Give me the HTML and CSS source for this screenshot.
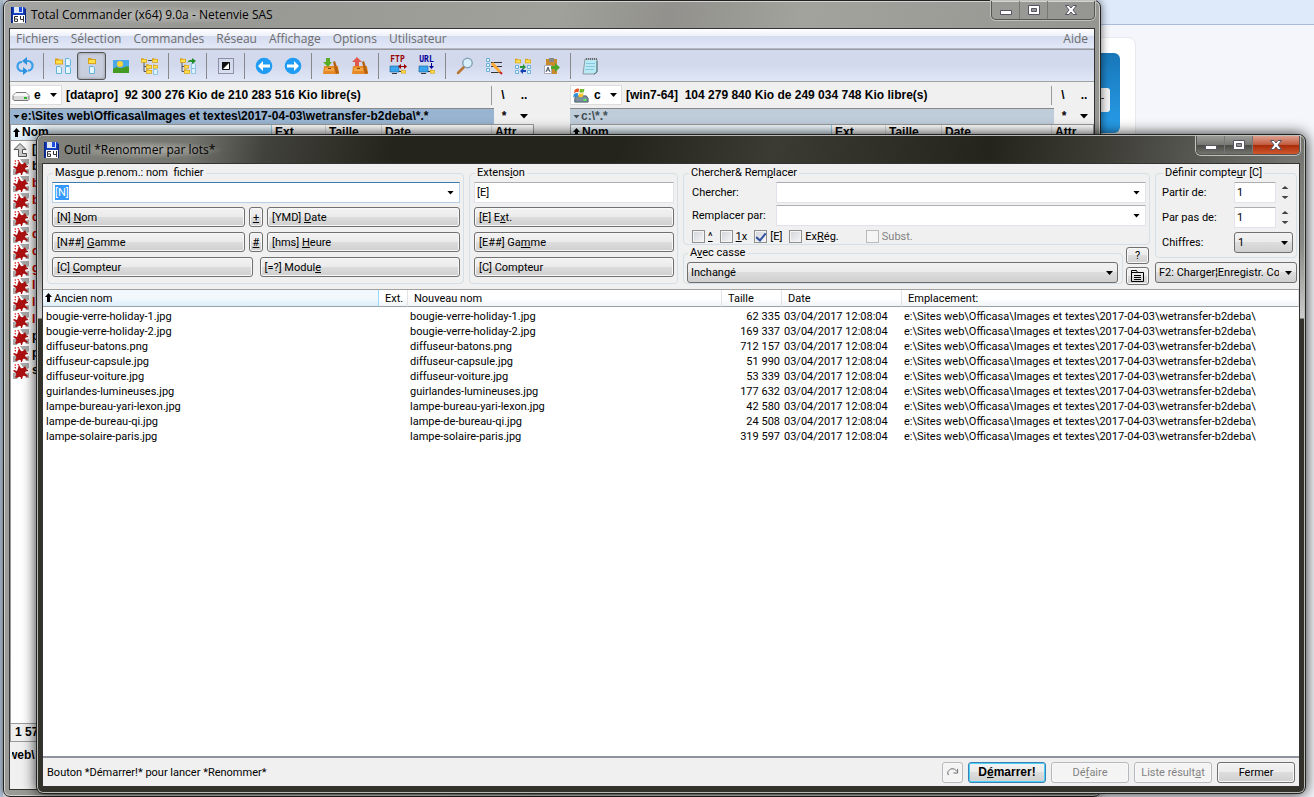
FILE: index.html
```html
<!DOCTYPE html>
<html lang="fr">
<head>
<meta charset="utf-8">
<title>Total Commander (x64) 9.0a - Netenvie SAS</title>
<link rel="stylesheet" href="styles.css">
</head>
<body>
<svg class="defs" aria-hidden="true">
  <symbol id="disk" viewBox="0 0 16 16"><path d="M1 0h13l2 2v14H1z" fill="#123fc4"/><path d="M1 0h1.500v16H1zM14.500 2H16v14h-1.500z" fill="#0a2680"/><path d="M4 0h9v6H4z" fill="#dfe7f5"/><path d="M9 0h3v5H9z" fill="#1d4fdc"/><path d="M3 8h12v8H3z" fill="#fff"/><path d="M8 9.500H4.500v5h3v-2.500h-3M10.500 9v3.500H14M13.500 9v6" stroke="#333" fill="none"/></symbol>
  <symbol id="folder" viewBox="0 0 8 6"><path d="M0 0h3l1 1h4v5H0z" fill="#d9a31a"/><path d="M1 2h6v3H1z" fill="#ffe04d"/></symbol>
  <symbol id="page" viewBox="0 0 6 8"><path d="M.5.5h3.500l1.500 1.500v5.500h-5z" fill="#e4f5fd" stroke="#65b4dc"/></symbol>
  <symbol id="refresh" viewBox="0 0 18 18"><path d="M8 14H6a4.500 4.500 0 0 1-4.500-5A4.500 4.500 0 0 1 6 5M10 4h2a4.500 4.500 0 0 1 4.500 5 4.500 4.500 0 0 1-4.500 4.500" fill="none" stroke="#3a9ee8" stroke-width="2.200"/><path d="M7 10v8l5-4zM11 0v8L6 4z" fill="#2c91df"/></symbol>
  <symbol id="left" viewBox="0 0 18 18"><circle cx="9" cy="9" r="8.300" fill="#209cf4"/><path d="M3 9l5-5v3.500h7v3H8V14z" fill="#fff"/></symbol>
  <symbol id="right" viewBox="0 0 18 18"><circle cx="9" cy="9" r="8.300" fill="#209cf4"/><path d="M15 9l-5-5v3.500H3v3h7V14z" fill="#fff"/></symbol>
  <symbol id="brief" viewBox="0 0 18 18"><use href="#folder" x="1" y="1" width="8" height="7"/><use href="#page" x="11" y="1" width="6" height="8"/><use href="#page" x="2" y="9" width="6" height="8"/><use href="#page" x="11" y="9" width="6" height="8"/></symbol>
  <symbol id="full" viewBox="0 0 18 18"><use href="#folder" x="5" y="1" width="8" height="6"/><use href="#page" x="6" y="9" width="6" height="8"/></symbol>
  <symbol id="thumbs" viewBox="0 0 18 18"><path d="M1 3h16v13H1z" fill="#49a8e8"/><circle cx="8" cy="7" r="3" fill="#ffd13a"/><path d="M1 12c4-4 6 0 9-1s5-2 7-1v6H1z" fill="#459b21"/></symbol>
  <symbol id="tree" viewBox="0 0 18 18"><path d="M3 5v9.500h8M3 9.500h7M7 3.500h4" stroke="#555" fill="none"/><use href="#folder" x="0" y="1" width="6" height="5"/><use href="#folder" x="11" y="1" width="6" height="5"/><use href="#folder" x="5" y="7" width="6" height="5"/><use href="#folder" x="12" y="7" width="5" height="5"/><use href="#folder" x="5" y="12" width="6" height="5"/><use href="#page" x="12" y="12" width="5" height="6"/></symbol>
  <symbol id="branch" viewBox="0 0 18 18"><path d="M3 5v9.500h8M3 9.500h7" stroke="#555" fill="none"/><use href="#folder" x="1" y="1" width="6" height="5"/><use href="#folder" x="5" y="7" width="5" height="5"/><use href="#folder" x="5" y="12" width="6" height="5"/><use href="#page" x="12" y="6" width="5" height="6"/><use href="#page" x="12" y="11" width="5" height="6"/><path d="M8 6q2-4 5-3V1l4 3-4 3V5q-3-1-5 1" fill="#218c27"/></symbol>
  <symbol id="invert" viewBox="0 0 18 18"><path d="M1.500 1.500h15v15h-15z" fill="none" stroke="#445" stroke-dasharray="1 1"/><path d="M5.500 5.500h7v7h-7z" fill="#fff" stroke="#111"/><path d="M5 5h8l-8 8z" fill="#111"/></symbol>
  <symbol id="pack" viewBox="0 0 18 18"><path d="M2 9h14l1 8H1z" fill="#e58a24"/><path d="M11 5l2-1 4 12-3 1z" fill="#b36112"/><path d="M3 11h9v3H3z" fill="#f4a64a"/><path d="M6 11h3v1H6z" fill="#7b420a"/><path d="M4 1h4v4h2L6 10 1 5h3z" fill="#58ad22"/></symbol>
  <symbol id="unpack" viewBox="0 0 18 18"><path d="M2 9h14l1 8H1z" fill="#e58a24"/><path d="M11 5l2-1 4 12-3 1z" fill="#b36112"/><path d="M3 11h9v3H3z" fill="#f4a64a"/><path d="M6 11h3v1H6z" fill="#7b420a"/><path d="M6 0l5 5H8v4H4V5H1z" fill="#e25a4d"/></symbol>
  <symbol id="net" viewBox="0 0 18 18"><path d="M1 9h9v6H1z" fill="#38a6ee" stroke="#145b94" stroke-width=".6"/><path d="M3 16.500h5M10 14.500h3" stroke="#333"/><use href="#folder" x="12" y="12" width="5" height="5"/></symbol>
  <symbol id="ftparrow" viewBox="0 0 18 18"><path d="M9 9.500l3-2.500v2h3V7l3 2.500-3 2.500v-2h-3v2z" fill="#900"/></symbol>
  <symbol id="urlarrow" viewBox="0 0 18 18"><path d="M13 6h1v3h2l-2.500 3L11 9h2z" fill="#009"/></symbol>
  <symbol id="search" viewBox="0 0 18 18"><path d="M2 16l6-6" stroke="#b87433" stroke-width="2.500" stroke-linecap="round"/><circle cx="11.500" cy="6" r="4.700" fill="#d7f0fc" stroke="#88a2b8" stroke-width="1.500"/></symbol>
  <symbol id="rename" viewBox="0 0 18 18"><path d="M1.500 1.500h3v3h-3zM1.500 6.500h3v3h-3zM1.500 11.500h3v3h-3z" fill="#e4f5fd" stroke="#69b1d8"/><path d="M6 5.500h11M6 9.500h11M6 15.500h9" stroke="#333"/><path d="M7 6l8 9" stroke="#fa3" stroke-width="3"/><path d="M15 15l2 2" stroke="#c22" stroke-width="2"/></symbol>
  <symbol id="sync" viewBox="0 0 18 18"><use href="#folder" x="1" y="1" width="6" height="6"/><use href="#folder" x="11" y="1" width="6" height="6"/><path d="M1.500 8.500h3v3h-3zM1.500 13.500h3v3h-3zM13.500 8.500h3v3h-3zM13.500 13.500h3v3h-3z" fill="#e4f5fd" stroke="#69b1d8"/><path d="M6 9h3V7l3 3-3 3v-2H6z" fill="#299636"/><path d="M12 13H9v-2l-3 3 3 3v-2h3z" fill="#153eb2"/></symbol>
  <symbol id="clip" viewBox="0 0 18 18"><path d="M3 2h11v15H3z" fill="#c78b2b"/><path d="M6 1h5v4H6z" fill="#888"/><path d="M1.500 8.500h7v8h-7z" fill="#fff" stroke="#aab"/><path d="M3 15l2-5 2 5M4 13h2" stroke="#456" fill="none"/><path d="M8 9h4V6l5 4.500-5 4.500v-3H8z" fill="#4da82a"/></symbol>
  <symbol id="note" viewBox="0 0 18 18"><path d="M4 2h12v13l-2 2H2z" fill="#b9e9f4" stroke="#8a9aa0"/><path d="M5 2h11" stroke="#6b6b6b" stroke-width="2" stroke-dasharray="1 1"/><path d="M5 6.500h9M5 9.500h9M4 12.500h9" stroke="#84c9db"/><path d="M16 4v11l-3 2" stroke="#57767d" fill="none"/></symbol>
  <symbol id="splat" viewBox="0 0 16 16"><path d="M7 0h9v5l-4 2zM0 10l5-1 2 3-3 4H0zM11 11l5-1v5h-3z" fill="#aaa"/><path d="M5 5l1-3 2 3q2 1 4-2l1 2q0 2 2 2v1q-3 0-3 2l3 3-1 1q-3-2-4-1l-1 3H8q0-3-2-2l-3 1-1-1q2-2 1-4L0 8l1-1 3 1z" fill="#ad1010"/><path d="M1 2l2-1v2zM4 1h2v2zM1 4h2v2z" fill="#d33"/></symbol>
  <symbol id="up" viewBox="0 0 16 16"><path d="M7 1.500l6 6H9.500v4h4v3h-8v-7H1z" fill="#ccc" stroke="#555"/></symbol>
  <symbol id="drive" viewBox="0 0 18 16"><path d="M4 5.500h10l3 3v4l-1 1H2l-1-1v-4z" fill="#d9d9d9" stroke="#777"/><path d="M4 6h10l3 3H1z" fill="#f7f7f7"/><path d="M12 11h3" stroke="#28b828" stroke-width="2"/></symbol>
  <symbol id="windrive" viewBox="0 0 18 18"><path d="M3 10h12l2 3v4H2v-4z" fill="#7b929e" stroke="#456"/><path d="M12 14.500h3" stroke="#5f4" stroke-width="2"/><path d="M2 3q3-2 5-1L6 6Q4 5 1 7z" fill="#e65322"/><path d="M8 2q3 1 5 0l-1 4q-2 1-5 0z" fill="#71b929"/><path d="M1 8q3-2 5-1l-1 4q-3-1-5 1z" fill="#2b91dd"/><path d="M7 7q3 1 5 0l-1 4q-3 1-5 0z" fill="#ffc629"/></symbol>
  <symbol id="min" viewBox="0 0 14 12"><path d="M1.500 6.500h11v4h-11z" fill="#fff" stroke="#556"/></symbol>
  <symbol id="max" viewBox="0 0 14 12"><path d="M1.500 1.500h11v9h-11z" fill="#fff" stroke="#556"/><path d="M4.500 4.500h5v3h-5z" fill="#999" stroke="#556"/></symbol>
  <symbol id="close" viewBox="0 0 14 12"><path d="M1.500 1.500h3.500L7 4l2-2.500h3.500L9 6l3.500 4.500H9L7 8l-2 2.500H1.500L5 6z" fill="#fff" stroke="#556"/></symbol>
</svg>

<div class="desktop">
  <div class="ribbon"></div>
  <div class="card"><div class="tile"><span class="tab">-</span></div></div>
</div>

<section class="window main-window">
  <header class="titlebar">
    <svg class="app-icon"><use href="#disk"/></svg>
    <h1 class="title">Total Commander (x64) 9.0a - Netenvie SAS</h1>
    <div class="controls">
      <button class="ctl" aria-label="Réduire"><svg><use href="#min"/></svg></button>
      <button class="ctl" aria-label="Agrandir"><svg><use href="#max"/></svg></button>
      <button class="ctl ctl-close" aria-label="Fermer"><svg><use href="#close"/></svg></button>
    </div>
  </header>
  <div class="client">
    <nav class="menu">
      <a href="#">Fichiers</a><a href="#">Sélection</a><a href="#">Commandes</a><a href="#">Réseau</a><a href="#">Affichage</a><a href="#">Options</a><a href="#">Utilisateur</a><a href="#" class="help">Aide</a>
    </nav>
    <div class="toolbar">
      <button aria-label="Actualiser"><svg><use href="#refresh"/></svg></button><i class="sep"></i>
      <button aria-label="Abrégé"><svg><use href="#brief"/></svg></button>
      <button aria-label="Détaillé" class="pressed"><svg><use href="#full"/></svg></button>
      <button aria-label="Miniatures"><svg><use href="#thumbs"/></svg></button>
      <button aria-label="Arborescence"><svg><use href="#tree"/></svg></button><i class="sep"></i>
      <button aria-label="Branche"><svg><use href="#branch"/></svg></button><i class="sep"></i>
      <button aria-label="Inverser"><svg><use href="#invert"/></svg></button><i class="sep"></i>
      <button aria-label="Précédent"><svg><use href="#left"/></svg></button>
      <button aria-label="Suivant"><svg><use href="#right"/></svg></button><i class="sep"></i>
      <button aria-label="Compresser"><svg><use href="#pack"/></svg></button>
      <button aria-label="Décompresser"><svg><use href="#unpack"/></svg></button><i class="sep"></i>
      <button class="net-button ftp"><span>FTP</span><svg><use href="#net"/><use href="#ftparrow"/></svg></button>
      <button class="net-button url"><span>URL</span><svg><use href="#net"/><use href="#urlarrow"/></svg></button><i class="sep"></i>
      <button aria-label="Rechercher"><svg><use href="#search"/></svg></button>
      <button aria-label="Renommer"><svg><use href="#rename"/></svg></button>
      <button aria-label="Synchroniser"><svg><use href="#sync"/></svg></button>
      <button aria-label="Copier les noms"><svg><use href="#clip"/></svg></button><i class="sep"></i>
      <button aria-label="Bloc-notes"><svg><use href="#note"/></svg></button>
    </div>
    <div class="panels">
      <div class="panel">
        <div class="drive-row">
          <button class="drive"><svg><use href="#drive"/></svg>e<i class="arrow"></i></button>
          <span class="space">[datapro]&nbsp; 92 300 276 Kio de 210 283 516 Kio libre(s)</span>
          <button class="flat ruled">\</button><button class="flat">..</button>
        </div>
        <div class="path-row">
          <div class="path"><i class="arrow"></i>e:\Sites web\Officasa\Images et textes\2017-04-03\wetransfer-b2deba\*.*</div>
          <button class="flat">*</button><button class="flat" aria-label="Historique"><i class="arrow wide"></i></button>
        </div>
        <div class="columns"><span class="c-name"><svg class="sort" viewBox="0 0 7 9"><path d="M3.500 0L7 4H5v5H2V4H0z"/></svg>Nom</span><span class="c-ext">Ext</span><span class="c-size">Taille</span><span class="c-date">Date</span><span class="c-attr">Attr</span></div>
        <ul class="files">
          <li><svg><use href="#up"/></svg>[..]</li>
          <li><svg><use href="#splat"/></svg>b</li>
          <li class="sel"><svg><use href="#splat"/></svg>b</li>
          <li class="sel"><svg><use href="#splat"/></svg>b</li>
          <li class="sel"><svg><use href="#splat"/></svg>d</li>
          <li class="sel"><svg><use href="#splat"/></svg>d</li>
          <li class="sel"><svg><use href="#splat"/></svg>d</li>
          <li class="sel"><svg><use href="#splat"/></svg>g</li>
          <li class="sel"><svg><use href="#splat"/></svg>l</li>
          <li class="sel"><svg><use href="#splat"/></svg>l</li>
          <li class="sel"><svg><use href="#splat"/></svg>l</li>
          <li><svg><use href="#splat"/></svg>p</li>
          <li><svg><use href="#splat"/></svg>p</li>
          <li><svg><use href="#splat"/></svg>s</li>
        </ul>
        <div class="totals">1 57</div>
      </div>
      <div class="panel right-panel">
        <div class="drive-row">
          <button class="drive"><svg><use href="#windrive"/></svg>c<i class="arrow"></i></button>
          <span class="space">[win7-64]&nbsp; 104 279 840 Kio de 249 034 748 Kio libre(s)</span>
          <button class="flat ruled">\</button><button class="flat">..</button>
        </div>
        <div class="path-row">
          <div class="path idle"><i class="arrow"></i>c:\*.*</div>
          <button class="flat">*</button><button class="flat" aria-label="Historique"><i class="arrow wide"></i></button>
        </div>
        <div class="columns"><span class="c-name"><svg class="sort" viewBox="0 0 7 9"><path d="M3.500 0L7 4H5v5H2V4H0z"/></svg>Nom</span><span class="c-ext">Ext</span><span class="c-size">Taille</span><span class="c-date">Date</span><span class="c-attr">Attr</span></div>
        <ul class="files"></ul>
      </div>
    </div>
    <div class="command"><span>web\</span></div>
  </div>
</section>

<section class="window dialog">
  <header class="titlebar">
    <svg class="app-icon"><use href="#disk"/></svg>
    <h2 class="title">Outil *Renommer par lots*</h2>
    <div class="controls">
      <button class="ctl" aria-label="Réduire"><svg><use href="#min"/></svg></button>
      <button class="ctl" aria-label="Agrandir"><svg><use href="#max"/></svg></button>
      <button class="ctl ctl-close" aria-label="Fermer"><svg><use href="#close"/></svg></button>
    </div>
  </header>
  <div class="client">
    <div class="options">
      <fieldset class="mask">
        <legend><label for="mask">Mas<u>q</u>ue p.renom.: nom&nbsp; fichier</label></legend>
        <div class="combo focus"><input id="mask" type="text" value="[N]"><button aria-label="Ouvrir"><i class="arrow"></i></button></div>
        <div class="buttons"><button class="btn">[N]&nbsp;<u>N</u>om</button><button class="btn tiny"><u>+</u></button><button class="btn">[YMD]&nbsp;<u>D</u>ate</button></div>
        <div class="buttons"><button class="btn">[N##]&nbsp;<u>G</u>amme</button><button class="btn tiny"><u>#</u></button><button class="btn">[hms]&nbsp;<u>H</u>eure</button></div>
        <div class="buttons pair"><button class="btn">[C]&nbsp;<u>C</u>ompteur</button><button class="btn">[=?]&nbsp;Modul<u>e</u></button></div>
      </fieldset>
      <fieldset class="ext">
        <legend><label for="ext">Extens<u>i</u>on</label></legend>
        <div class="combo"><input id="ext" type="text" value="[E]"></div>
        <div class="buttons"><button class="btn">[E]&nbsp;E<u>x</u>t.</button></div>
        <div class="buttons"><button class="btn">[E##]&nbsp;Ga<u>m</u>me</button></div>
        <div class="buttons"><button class="btn">[C] Compteur</button></div>
      </fieldset>
      <div class="replace">
        <fieldset class="find">
          <legend>Chercher&amp; Rem<u>p</u>lacer</legend>
          <div class="field"><label for="find">Chercher:</label><div class="combo"><input id="find" type="text"><button aria-label="Ouvrir"><i class="arrow"></i></button></div></div>
          <div class="field"><label for="repl">Remplacer par:</label><div class="combo"><input id="repl" type="text"><button aria-label="Ouvrir"><i class="arrow"></i></button></div></div>
          <div class="checks">
            <label><input type="checkbox"><u>^</u></label>
            <label><input type="checkbox"><span><u>1</u>x</span></label>
            <label><input type="checkbox" checked>[E]</label>
            <label><input type="checkbox"><span>Ex<u>R</u>ég.</span></label>
            <label class="off"><input type="checkbox" disabled>Subst.</label>
          </div>
        </fieldset>
        <div class="case-row">
          <fieldset class="case">
            <legend><label for="case">A<u>v</u>ec casse</label></legend>
            <div class="select"><select id="case"><option>Inchangé</option></select><i class="arrow"></i></div>
          </fieldset>
          <div class="side">
            <button class="btn">?</button>
            <button class="btn" aria-label="Modifier les noms"><svg viewBox="0 0 14 14"><path d="M.5 12.500V1.500h5l1 2h6v9zM.5 3.500h6M3 6.500h7M3 8.500h7M3 10.500h7" fill="none" stroke="#000"/></svg></button>
          </div>
        </div>
      </div>
      <div class="counter-col">
        <fieldset class="counter">
          <legend>Définir compte<u>u</u>r [C]</legend>
          <div class="field"><label for="start">Partir de:</label><div class="combo"><input id="start" type="text" value="1"></div><div class="spin"><button aria-label="Plus"><i class="arrow up"></i></button><button aria-label="Moins"><i class="arrow"></i></button></div></div>
          <div class="field"><label for="step">Par pas de:</label><div class="combo"><input id="step" type="text" value="1"></div><div class="spin"><button aria-label="Plus"><i class="arrow up"></i></button><button aria-label="Moins"><i class="arrow"></i></button></div></div>
          <div class="field"><label for="digits">Chiffres:</label><div class="select"><select id="digits"><option>1</option></select><i class="arrow"></i></div></div>
        </fieldset>
        <div class="select preset"><select aria-label="Configuration"><option>F2: Charger¦Enregistr. Configuration</option></select><i class="arrow"></i></div>
      </div>
    </div>
    <div class="list">
      <table>
        <colgroup><col class="w-old"><col class="w-ext"><col class="w-new"><col class="w-size"><col class="w-date"><col></colgroup>
        <thead><tr><th class="sorted"><svg class="sort" viewBox="0 0 7 9"><path d="M3.500 0L7 4H5v5H2V4H0z"/></svg>Ancien nom</th><th>Ext.</th><th>Nouveau nom</th><th>Taille</th><th>Date</th><th>Emplacement:</th></tr></thead>
        <tbody>
          <tr><td>bougie-verre-holiday-1.jpg</td><td></td><td>bougie-verre-holiday-1.jpg</td><td class="num">62 335</td><td>03/04/2017 12:08:04</td><td>e:\Sites web\Officasa\Images et textes\2017-04-03\wetransfer-b2deba\</td></tr>
          <tr><td>bougie-verre-holiday-2.jpg</td><td></td><td>bougie-verre-holiday-2.jpg</td><td class="num">169 337</td><td>03/04/2017 12:08:04</td><td>e:\Sites web\Officasa\Images et textes\2017-04-03\wetransfer-b2deba\</td></tr>
          <tr><td>diffuseur-batons.png</td><td></td><td>diffuseur-batons.png</td><td class="num">712 157</td><td>03/04/2017 12:08:04</td><td>e:\Sites web\Officasa\Images et textes\2017-04-03\wetransfer-b2deba\</td></tr>
          <tr><td>diffuseur-capsule.jpg</td><td></td><td>diffuseur-capsule.jpg</td><td class="num">51 990</td><td>03/04/2017 12:08:04</td><td>e:\Sites web\Officasa\Images et textes\2017-04-03\wetransfer-b2deba\</td></tr>
          <tr><td>diffuseur-voiture.jpg</td><td></td><td>diffuseur-voiture.jpg</td><td class="num">53 339</td><td>03/04/2017 12:08:04</td><td>e:\Sites web\Officasa\Images et textes\2017-04-03\wetransfer-b2deba\</td></tr>
          <tr><td>guirlandes-lumineuses.jpg</td><td></td><td>guirlandes-lumineuses.jpg</td><td class="num">177 632</td><td>03/04/2017 12:08:04</td><td>e:\Sites web\Officasa\Images et textes\2017-04-03\wetransfer-b2deba\</td></tr>
          <tr><td>lampe-bureau-yari-lexon.jpg</td><td></td><td>lampe-bureau-yari-lexon.jpg</td><td class="num">42 580</td><td>03/04/2017 12:08:04</td><td>e:\Sites web\Officasa\Images et textes\2017-04-03\wetransfer-b2deba\</td></tr>
          <tr><td>lampe-de-bureau-qi.jpg</td><td></td><td>lampe-de-bureau-qi.jpg</td><td class="num">24 508</td><td>03/04/2017 12:08:04</td><td>e:\Sites web\Officasa\Images et textes\2017-04-03\wetransfer-b2deba\</td></tr>
          <tr><td>lampe-solaire-paris.jpg</td><td></td><td>lampe-solaire-paris.jpg</td><td class="num">319 597</td><td>03/04/2017 12:08:04</td><td>e:\Sites web\Officasa\Images et textes\2017-04-03\wetransfer-b2deba\</td></tr>
        </tbody>
      </table>
    </div>
    <footer class="footer">
      <span class="hint">Bouton *Démarrer!* pour lancer *Renommer*</span>
      <button class="btn redo" aria-label="Rétablir" disabled><svg viewBox="0 0 14 10"><path d="M3 8H2V5l3-3h4l3 3M12.500 2v4.500H8" fill="none" stroke="#666"/></svg></button>
      <button class="btn default">D<u>é</u>marrer!</button>
      <button class="btn" disabled>Dé<u>f</u>aire</button>
      <button class="btn" disabled>Liste résult<u>a</u>t</button>
      <button class="btn">Fermer</button>
    </footer>
  </div>
</section>
<script src="script.js"></script>
</body>
</html>
```

FILE: styles.css
```css
* { box-sizing: border-box; }
html, body { height: 100%; }
body { margin: 0; overflow: hidden; position: relative; background: #f5f6fb; color: #000; font: 11px/15px Roboto, "Liberation Sans", sans-serif; }
button, input, select { font: inherit; color: inherit; margin: 0; padding: 0; border: 0; border-radius: 0; background: none; outline: 0; }
svg { display: block; flex: none; }
.defs { position: absolute; width: 0; height: 0; }

.arrow { width: 7px; height: 4px; background: #000; clip-path: polygon(0 0, 100% 0, 50% 100%); flex: none; }
.arrow.wide { width: 9px; height: 5px; }
.arrow.up { clip-path: polygon(50% 0, 100% 100%, 0 100%); }
.sort { width: 7px; height: 9px; }

.desktop { height: 100%; border-left: 3px solid #b7c8dc; }
.ribbon { height: 25px; background: #deeafa; border-bottom: 1px solid #a9bddb; }
.card { width: 1133px; height: 150px; margin-top: 12px; padding: 15px; background: #fff; border: 1px solid #e8e9ee; border-radius: 8px; }
.tile { height: 80px; padding: 35px 10px 0 0; border-radius: 6px; background: linear-gradient(#1877b8, #289fec); text-align: right; }
.tab { display: inline-block; width: 20px; height: 24px; line-height: 22px; padding-right: 6px; background: #f3f3f3; border-radius: 3px; }

.window { position: absolute; display: flex; flex-direction: column; border: 1px solid #222; border-radius: 7px; padding: 0 5px 6px; }
.main-window { inset: 0 213px 0 3px; background: linear-gradient(100deg, #a5a5a3 0, #979793 15%, #a0a19b 45%, #92918d 54%, #a2a39d 65%, #8f908c 100%); box-shadow: 0 0 8px rgba(0,0,0,.6), inset 0 0 0 1px #d3d3d0; }
.dialog { inset: 134px 8px 3px 36px; background: linear-gradient(#73736e 0, #8a8a86 110px, #ccc 183px, #32322b 184px, #32322b 100%); box-shadow: 0 0 14px rgba(0,0,0,.85), inset 0 0 0 1px #babab6; }
.titlebar { flex: none; display: flex; align-items: center; height: 27px; margin: 0 -4px; padding-left: 5px; border-radius: 6px 6px 0 0; }
.dialog .titlebar { margin-top: 1px; background: linear-gradient(100deg, #83837e 0, #75756f 12%, #42423c 18%, #24241c 28%, #24241c 46%, #3b3b34 58%, #24241c 75%, #3d3d36 84%, #777873 100%); }
.app-icon { width: 16px; height: 16px; }
.title { margin: 0 0 0 5px; padding: 0 10px 0 0; font: 12px/18px "Open Sans", "Noto Sans", sans-serif; background: radial-gradient(closest-side, rgba(190,190,186,.8), rgba(180,180,176,0)); }
.controls { display: flex; align-self: flex-start; margin: 0 4px 0 auto; height: 19px; border: 1px solid #555; border-top: 0; border-radius: 0 0 5px 5px; overflow: hidden; box-shadow: 0 0 0 1px #c0c0bd; }
.ctl { width: 28px; display: flex; align-items: center; justify-content: center; border-right: 1px solid #777; }
.ctl-close { width: 46px; border-right: 0; }
.ctl svg { width: 14px; height: 12px; }
.dialog .ctl { background: linear-gradient(#9b9b98, #777773 49%, #4a4a44 50%, #757570); }
.dialog .ctl-close { background: linear-gradient(#dda090, #c15a3e 49%, #a82a08 50%, #d0582d); }
.client { flex: 1; min-height: 0; display: flex; flex-direction: column; background: #f0f0f0; border: 1px solid #333; }

.menu { flex: none; display: flex; gap: 12px; height: 20px; padding: 0 6px; background: linear-gradient(#fff 0, #eef1fa 35%, #d5dcf0 36%, #e2e8f6); border-bottom: 1px solid #b5b9c8; font: 12px/20px "Open Sans", "Noto Sans", sans-serif; }
.menu a { color: #6d6d6d; text-decoration: none; }
.menu .help { margin-left: auto; }
.toolbar { flex: none; display: flex; align-items: center; height: 33px; border-top: 1px solid #999; border-bottom: 1px solid #a0a0a0; background: linear-gradient(#d2d9ed, #d2d9ed 50%, #e0e7f7); }
.toolbar button { position: relative; width: 29px; height: 28px; display: grid; place-items: center; }
.toolbar svg { width: 18px; height: 18px; }
.toolbar .pressed { border: 1px solid #555; border-radius: 3px; background: #c8cede; box-shadow: inset 0 0 3px #888; }
.sep { width: 1px; height: 26px; margin: 0 4px; background: #888; }
.net-button span { position: absolute; inset: 4px 0 auto; font: bold 8px/8px "DejaVu Sans Mono", monospace; color: #900; }
.net-button.url span { color: #009; }

.panels { flex: 1; min-height: 0; display: flex; gap: 36px; font: bold 12px/17px "Liberation Sans", Arial, sans-serif; }
.panel { flex: 1; min-width: 0; display: flex; flex-direction: column; }
.drive-row { flex: none; display: flex; align-items: center; height: 26px; }
.drive { width: 52px; height: 20px; display: flex; align-items: center; background: #fff; border: 1px solid #ddd; }
.drive svg { width: 18px; height: 16px; margin: 0 4px 0 1px; }
.drive .arrow { margin: 0 4px 0 auto; }
.space { flex: 1; padding-left: 4px; white-space: nowrap; overflow: hidden; }
.flat { width: 20px; height: 16px; display: grid; place-items: center; }
.ruled { width: 23px; height: 19px; border-left: 1px solid #999; }
.path-row { flex: none; display: flex; align-items: center; height: 16px; }
.path { flex: 1; display: flex; align-items: center; gap: 1px; height: 16px; padding-left: 3px; background: #99b4d1; border-top: 1px solid #888; white-space: nowrap; overflow: hidden; }
.path.idle { background: #bfcddb; color: #434e54; }
.idle .arrow { background: #434e54; }
.columns { flex: none; display: flex; height: 17px; border: 1px solid #999; background: linear-gradient(#fff, #f1f2f4); }
.columns span { display: flex; align-items: center; gap: 2px; padding-left: 3px; border-right: 1px solid #ddd; }
.columns .c-name { flex: 1; padding-left: 2px; background: linear-gradient(#f3fbff, #d9ecf7); border-color: #96d0ee; }
.c-ext { width: 54px; } .c-size { width: 56px; } .c-date { width: 110px; } .columns .c-attr { width: 41px; border: 0; }
.files { flex: 1; min-height: 0; margin: 0; padding: 0 0 0 2px; list-style: none; background: #fff; border-left: 1px solid #999; overflow: hidden; }
.files li { display: flex; align-items: center; gap: 3px; height: 17px; }
.files svg { width: 16px; height: 16px; }
.sel { color: #c00; }
.totals { flex: none; height: 19px; padding-left: 4px; border: 1px solid #999; }
.command { flex: none; height: 47px; padding: 5px 0 0 2px; font: bold 12px/17px "Liberation Sans", Arial, sans-serif; }
.command span { display: block; overflow: hidden; text-indent: -4px; }

.options { flex: none; display: flex; gap: 5px; height: 125px; padding: 1px 2px 5px 4px; }
fieldset { min-width: 0; margin: 0; padding: 1px 3px 4px 4px; border: 1px solid #d5dfe5; border-radius: 4px; }
legend { height: 16px; padding: 0 2px; margin-left: 1px; line-height: 16px; }
.mask { flex: 0 0 417px; }
.ext { flex: 0 0 209px; }
.replace { flex: 1; min-width: 0; display: flex; flex-direction: column; }
.counter-col { flex: 0 0 142px; }
.combo { flex: 1; min-width: 0; display: flex; height: 21px; background: #fff; border: 1px solid #e2e3ea; border-top-color: #abadb3; }
.combo.focus { border-color: #b5cfe7; border-top-color: #3d7bad; }
.combo input { flex: 1; min-width: 0; padding-left: 2px; }
.combo input::selection { background: #39f; color: #fff; }
.combo button { width: 17px; display: grid; place-items: center; }
.buttons { display: flex; gap: 4px; margin-top: 5px; }
.combo + .buttons { margin-top: 4px; }
.buttons.pair { gap: 7px; }
.btn { height: 20px; padding: 0 4px; border: 1px solid #707070; border-radius: 3px; background: linear-gradient(#f2f2f2, #ebebeb 49%, #ddd 50%, #cfcfcf); box-shadow: inset 0 0 0 1px #f8f8f8; white-space: nowrap; }
.buttons .btn { flex: 1; min-width: 0; text-align: left; }
.buttons .tiny { flex: 0 0 14px; padding: 0; text-align: center; }
.field { display: flex; align-items: center; margin-bottom: 2px; }
.field label { width: 84px; }
.find { flex: none; padding-bottom: 0; height: 80px; }
.find .field { padding-left: 4px; }
.checks { display: flex; align-items: center; gap: 7px; padding-left: 4px; height: 17px; }
.checks label { display: flex; align-items: center; gap: 3px; }
.checks input { appearance: none; width: 13px; height: 13px; display: grid; place-items: center; border: 1px solid #8e8f8f; background: linear-gradient(135deg, #d0d3d8, #f5f6f7); box-shadow: inset 0 0 0 1px #f4f4f4; }
.checks input:checked::before { content: ""; width: 4px; height: 8px; margin-bottom: 2px; border: solid #31519e; border-width: 0 2px 2px 0; transform: rotate(40deg); }
.checks .off { margin-left: 20px; color: #838383; }
.checks .off input { border-color: #bbb; background: #f5f5f5; }
.case-row { display: flex; gap: 3px; }
.case { flex: 1; padding: 1px 4px 1px 3px; height: 39px; }
.side { width: 23px; display: flex; flex-direction: column; gap: 3px; padding-top: 2px; margin-right: 1px; }
.side .btn { height: 17px; padding: 0; display: grid; place-items: center; }
.side .btn + .btn { height: 18px; }
.side svg { width: 14px; height: 14px; }
.select { position: relative; height: 21px; }
.select select { appearance: none; display: block; width: 100%; height: 100%; padding: 0 17px 0 3px; border: 1px solid #707070; border-radius: 3px; background: linear-gradient(#f2f2f2, #ebebeb 49%, #ddd 50%, #cfcfcf); white-space: nowrap; overflow: hidden; }
.select .arrow { position: absolute; right: 5px; top: 9px; pointer-events: none; }
.counter { height: 93px; padding: 1px 3px 0 6px; }
.counter .field { margin-bottom: 4px; }
.counter label { width: 72px; }
.counter .combo { flex: 0 0 42px; }
.counter .select { flex: 1; }
.spin { width: 14px; height: 20px; margin-left: 2px; display: flex; flex-direction: column; }
.spin button { flex: 1; display: grid; place-items: center; }
.spin .arrow { height: 3px; background: #444; }
.preset { margin-top: 4px; }

.list { flex: 1; min-height: 0; background: #fff; border-top: 1px solid #a0a0a0; border-bottom: 2px solid #8f949c; overflow: hidden; }
table { width: 100%; table-layout: fixed; border-collapse: separate; border-spacing: 0; }
.w-old { width: 336px; } .w-ext { width: 29px; } .w-new { width: 314px; } .w-size { width: 60px; } .w-date { width: 120px; }
th { height: 17px; padding: 1px 0 0 6px; text-align: left; font-weight: normal; background: linear-gradient(#fff 50%, #f2f3f6); border-right: 1px solid #e2e3e6; border-bottom: 1px solid #9aa0a8; white-space: nowrap; }
.sorted { padding-left: 2px; background: linear-gradient(#f2f9fd 50%, #dcedf8); border-right-color: #96d9f9; }
.sorted .sort { display: inline-block; margin-right: 2px; }
td { height: 15px; padding: 0 2px; line-height: 15px; white-space: nowrap; }
td:first-child { padding-left: 3px; }
tbody tr:first-child td { height: 17px; padding-top: 2px; }
.num { text-align: right; }

.footer { flex: none; display: flex; align-items: center; gap: 5px; height: 28px; padding: 0 4px; }
.hint { flex: 1; }
.footer .btn { width: 78px; height: 21px; }
.footer .redo { width: 21px; padding: 0 3px; }
.footer .btn:disabled { border-color: #b5b8bc; background: #f4f4f4; color: #838383; }
.footer .default { border-color: #3c7fb1; box-shadow: inset 0 0 0 1px #48d0f8; font: bold 12px/15px "Liberation Sans", Arial, sans-serif; }
```

FILE: script.js
```js
const mask = document.getElementById("mask");
mask.focus();
mask.select();
```
